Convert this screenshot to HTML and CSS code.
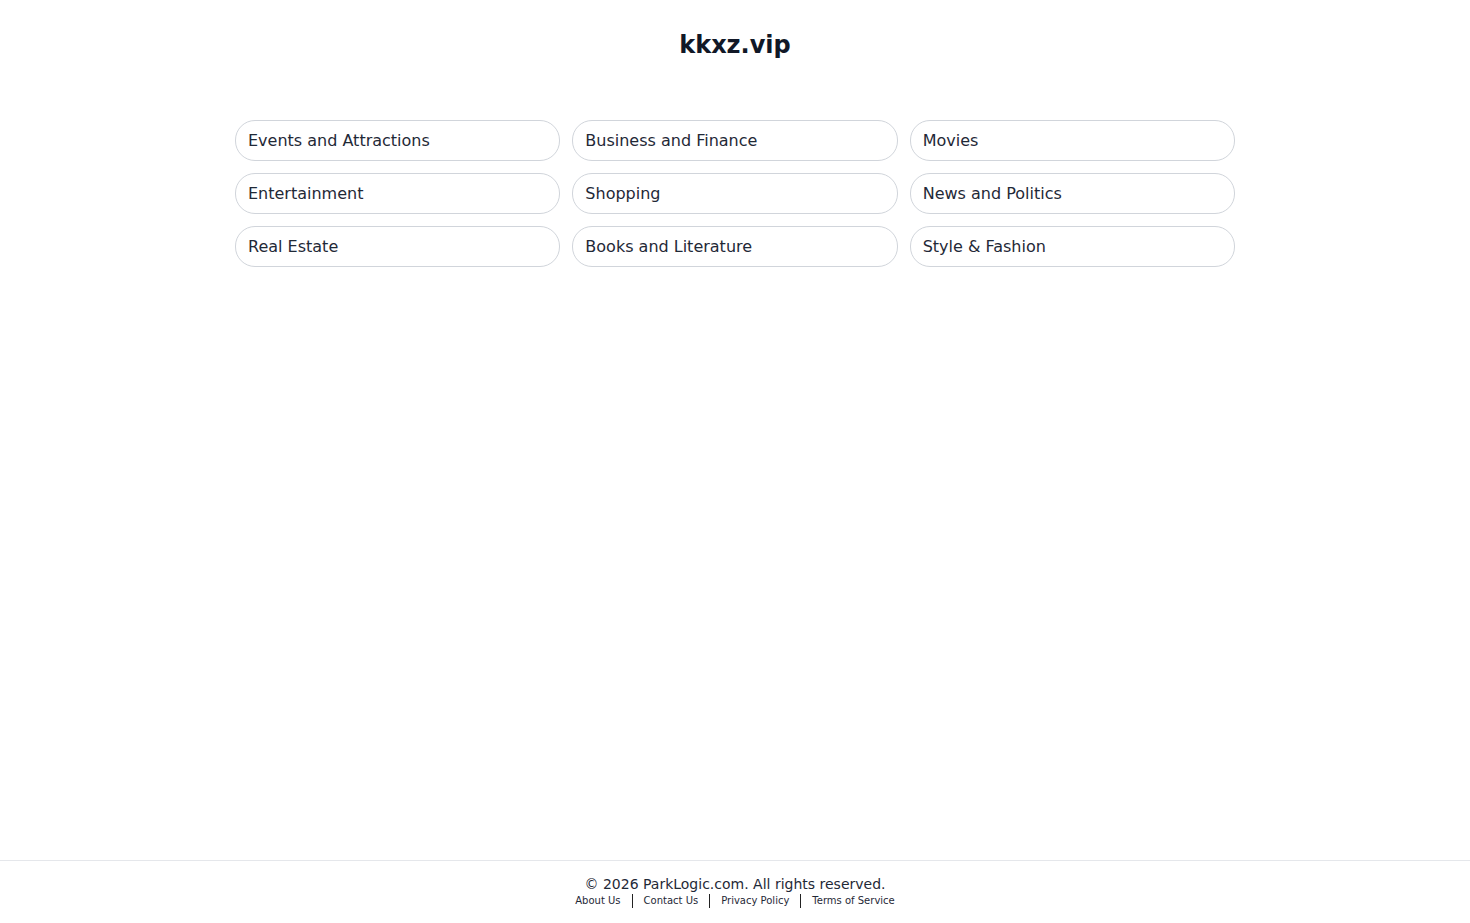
FILE: index.html
```html
<!DOCTYPE html>
<html lang="en">
<head>
<meta charset="utf-8">
<title>kkxz.vip</title>
<link rel="stylesheet" href="styles.css">
</head>
<body>
<div class="page">
  <header class="header">
    <h1 class="title">kkxz.vip</h1>
  </header>
  <main class="main">
    <div class="grid">
      <a class="item" href="#">Events and Attractions</a>
      <a class="item" href="#">Business and Finance</a>
      <a class="item" href="#">Movies</a>
      <a class="item" href="#">Entertainment</a>
      <a class="item" href="#">Shopping</a>
      <a class="item" href="#">News and Politics</a>
      <a class="item" href="#">Real Estate</a>
      <a class="item" href="#">Books and Literature</a>
      <a class="item" href="#">Style &amp; Fashion</a>
    </div>
  </main>
  <footer class="footer">
    <p class="copy">© 2026 ParkLogic.com. All rights reserved.</p>
    <nav class="links">
      <a class="link" href="#">About Us</a>
      <span class="sep"></span>
      <a class="link" href="#">Contact Us</a>
      <span class="sep"></span>
      <a class="link" href="#">Privacy Policy</a>
      <span class="sep"></span>
      <a class="link" href="#">Terms of Service</a>
    </nav>
  </footer>
</div>
</body>
</html>
```
FILE: styles.css
```css
html, body {
  margin: 0;
  padding: 0;
  background: #ffffff;
}
body {
  font-family: "DejaVu Sans", sans-serif;
  color: #1f2937;
}
.page {
  min-height: 100vh;
  display: flex;
  flex-direction: column;
}
.header {
  padding-top: 29px;
  text-align: center;
}
.title {
  margin: 0;
  font-size: 24px;
  line-height: 32px;
  font-weight: bold;
  color: #111827;
}
.main {
  padding-top: 59px;
  display: flex;
  justify-content: center;
}
.grid {
  width: 1000px;
  display: grid;
  grid-template-columns: repeat(3, 1fr);
  gap: 12px;
}
.item {
  display: block;
  height: 39px;
  line-height: 39px;
  padding: 0 12px;
  border: 1px solid #d1d5db;
  border-radius: 20px;
  font-size: 16px;
  color: #1f2937;
  text-decoration: none;
  white-space: nowrap;
}
.footer {
  margin-top: auto;
  border-top: 1px solid #e5e7eb;
  padding: 13px 0 15px;
  text-align: center;
}
.copy {
  margin: 0;
  font-size: 14px;
  line-height: 20px;
  color: #1f2937;
}
.links {
  display: flex;
  justify-content: center;
  align-items: center;
  gap: 11px;
  height: 14px;
}
.link {
  font-size: 10px;
  line-height: 14px;
  color: #1f2937;
  text-decoration: none;
}
.sep {
  width: 0;
  height: 14px;
  border-left: 1.5px solid #222;
}
```
